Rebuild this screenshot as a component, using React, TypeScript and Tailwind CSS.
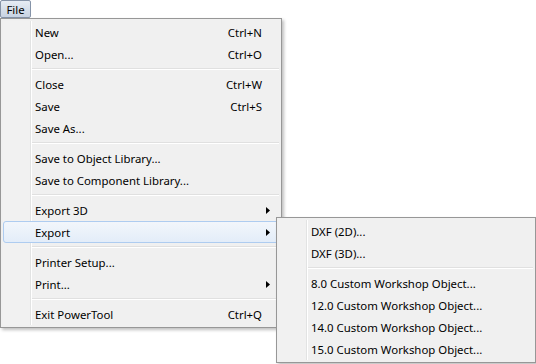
type Item = { label: string; shortcut?: string; sub?: boolean; active?: boolean } | 'sep'

const fileItems: Item[] = [
  { label: 'New', shortcut: 'Ctrl+N' },
  { label: 'Open...', shortcut: 'Ctrl+O' },
  'sep',
  { label: 'Close', shortcut: 'Ctrl+W' },
  { label: 'Save', shortcut: 'Ctrl+S' },
  { label: 'Save As...' },
  'sep',
  { label: 'Save to Object Library...' },
  { label: 'Save to Component Library...' },
  'sep',
  { label: 'Export 3D', sub: true },
  { label: 'Export', sub: true, active: true },
  'sep',
  { label: 'Printer Setup...' },
  { label: 'Print...', sub: true },
  'sep',
  { label: 'Exit PowerTool', shortcut: 'Ctrl+Q' },
]

const exportItems: Item[] = [
  { label: 'DXF (2D)...' },
  { label: 'DXF (3D)...' },
  'sep',
  { label: '8.0 Custom Workshop Object...' },
  { label: '12.0 Custom Workshop Object...' },
  { label: '14.0 Custom Workshop Object...' },
  { label: '15.0 Custom Workshop Object...' },
]

function MenuList({ items }: { items: Item[] }) {
  return (
    <div className="flex flex-col bg-[linear-gradient(to_right,#f1f1f1_27px,#e2e3e3_27px,#e2e3e3_28px,#ffffff_28px,#ffffff_29px,#f0f0f0_29px)]">
      {items.map((item, i) =>
        item === 'sep' ? (
          <div key={i} className="flex h-[8px] items-center pl-[29px]">
            <div className="h-[2px] w-full border-t border-b border-t-[#e0e0e0] border-b-white" />
          </div>
        ) : (
          <div
            key={i}
            className={
              item.active
                ? 'flex h-[22px] items-center rounded-[3px] border border-[#aeccf0] bg-[linear-gradient(to_bottom,#f2f6fb,#e3edf9)] pl-[31px] pt-[1px]'
                : 'flex h-[22px] items-center border border-transparent pl-[31px] pt-[1px]'
            }
          >
            <span className="flex-1 whitespace-nowrap">{item.label}</span>
            {item.shortcut && <span className="whitespace-nowrap">{item.shortcut}</span>}
            <span className="flex w-[16px] items-center pl-[4px]">
              {item.sub && (
                <svg width="4" height="7" viewBox="0 0 4 7">
                  <path d="M0 0 L4 3.5 L0 7 Z" fill="#000" />
                </svg>
              )}
            </span>
          </div>
        ),
      )}
    </div>
  )
}

export default function App() {
  return (
    <div className="relative h-[364px] w-[536px] overflow-hidden bg-white font-['Segoe_UI','Noto_Sans',sans-serif] text-[11.4px] leading-none text-black">
      <div className="flex h-[18px] w-[31px] items-center justify-center rounded-[2px] border border-[#8593a8] bg-[linear-gradient(to_bottom,#e6ecf4,#c8d3e2)] pt-[1px]">
        File
      </div>

      {/* main File menu */}
      <div className="absolute left-0 top-[18px] w-[282px] border border-[#979797] bg-[#f0f0f0] p-[2px] shadow-[2px_2px_3px_rgba(0,0,0,0.25)]">
        <MenuList items={fileItems} />
      </div>

      {/* Export submenu */}
      <div className="absolute left-[276px] top-[217px] w-[260px] border border-[#979797] bg-[#f0f0f0] p-[2px] shadow-[2px_2px_3px_rgba(0,0,0,0.25)]">
        <MenuList items={exportItems} />
      </div>
    </div>
  )
}
